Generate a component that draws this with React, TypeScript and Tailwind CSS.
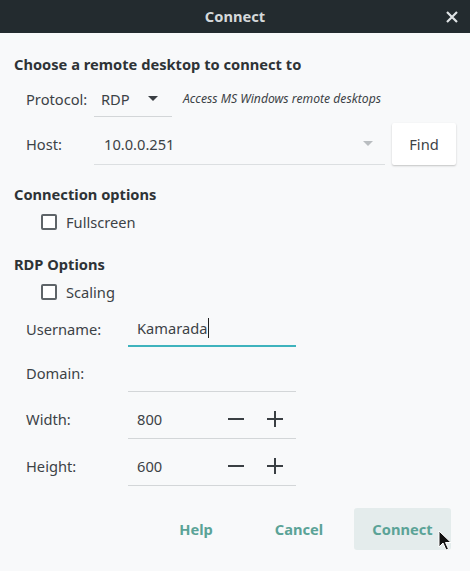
import React from "react";

const font = { fontFamily: '"Noto Sans", "Open Sans", sans-serif' };

const Checkbox = ({ label }: { label: string }) => (
  <div className="flex items-center h-[22px] pl-[27px]">
    <span className="w-4 h-4 border-2 border-[#5e6468] rounded-[2px] bg-white" />
    <span className="ml-[9px] text-[14.67px] text-[#3c4246]">{label}</span>
  </div>
);

const Minus = () => (
  <svg width="16" height="16" viewBox="0 0 16 16">
    <rect x="0" y="7" width="16" height="2" fill="#3a3f43" />
  </svg>
);

const Plus = () => (
  <svg width="16" height="16" viewBox="0 0 16 16">
    <rect x="0" y="7" width="16" height="2" fill="#3a3f43" />
    <rect x="7" y="0" width="2" height="16" fill="#3a3f43" />
  </svg>
);

const SpinRow = ({ label, value }: { label: string; value: string }) => (
  <div className="flex items-center h-[40px] mt-[7px]">
    <span className="w-[114px] pl-[12px] text-[14.67px] text-[#3c4246]">{label}</span>
    <div className="w-[168px] h-full flex items-center border-b border-[#d3d6d8]">
      <span className="pl-[9px] text-[14.67px] text-[#3c4246] flex-1">{value}</span>
      <span className="w-[39px] flex justify-center">
        <Minus />
      </span>
      <span className="w-[39px] flex justify-center mr-[2px]">
        <Plus />
      </span>
    </div>
  </div>
);

export default function App() {
  return (
    <div className="w-[470px] h-[571px] bg-[#f8f9fa] flex flex-col relative" style={font}>
      <div className="h-[33px] bg-[#232b2f] flex items-center justify-center relative">
        <span className="text-[14.67px] font-bold text-[#d5d9db] -mt-[1px]">Connect</span>
        <svg
          className="absolute right-[12px] top-[11px]"
          width="12"
          height="12"
          viewBox="0 0 12 12"
        >
          <path d="M1 1 L11 11 M11 1 L1 11" stroke="#dfe3e5" strokeWidth="2.2" />
        </svg>
      </div>

      <div className="flex flex-col px-[14px]">
        <div className="h-[22px] mt-[20px] flex items-center text-[14.67px] font-bold text-[#2e3336]">
          Choose a remote desktop to connect to
        </div>

        <div className="flex items-center h-[36px] mt-[6px]">
          <span className="w-[80px] pl-[12px] text-[14.67px] text-[#3c4246]">Protocol:</span>
          <div className="w-[78px] h-full flex items-center border-b border-[#d3d6d8]">
            <span className="pl-[7px] text-[14.67px] text-[#3c4246] flex-1">RDP</span>
            <svg className="mr-[14px]" width="10" height="6" viewBox="0 0 10 6">
              <path d="M0 0 L10 0 L5 5 Z" fill="#3a3f43" />
            </svg>
          </div>
          <span className="ml-[11px] text-[12.2px] italic text-[#3c4246]">
            Access MS Windows remote desktops
          </span>
        </div>

        <div className="flex items-center h-[42px] mt-[6px]">
          <span className="w-[80px] pl-[12px] text-[14.67px] text-[#3c4246]">Host:</span>
          <div className="w-[291px] h-[42px] flex items-center border-b border-[#dcdfe1]">
            <span className="pl-[10px] text-[14.67px] text-[#3c4246] flex-1">10.0.0.251</span>
            <svg className="mr-[12px]" width="10" height="6" viewBox="0 0 10 6">
              <path d="M0 0 L10 0 L5 5 Z" fill="#b9bdc0" />
            </svg>
          </div>
          <button className="ml-[7px] w-[64px] h-[42px] bg-white rounded-[2px] shadow-[0_1px_2px_rgba(0,0,0,0.22)] text-[14.67px] text-[#3c4246]">
            Find
          </button>
        </div>

        <div className="h-[22px] mt-[18px] flex items-center text-[14.67px] font-bold text-[#2e3336]">
          Connection options
        </div>
        <div className="mt-[6px]">
          <Checkbox label="Fullscreen" />
        </div>

        <div className="h-[22px] mt-[20px] flex items-center text-[14.67px] font-bold text-[#2e3336]">
          RDP Options
        </div>
        <div className="mt-[6px]">
          <Checkbox label="Scaling" />
        </div>

        <div className="flex items-center h-[36px] mt-[8px]">
          <span className="w-[114px] pl-[12px] text-[14.67px] text-[#3c4246]">Username:</span>
          <div className="w-[168px] h-full flex items-center border-b-2 border-[#3eb3bd]">
            <span className="pl-[9px] text-[14.67px] text-[#3c4246]">Kamarada</span>
            <span className="w-px h-[20px] bg-[#222] ml-[1px]" />
          </div>
        </div>

        <div className="flex items-center h-[38px] mt-[7px]">
          <span className="w-[114px] pl-[12px] text-[14.67px] text-[#3c4246]">Domain:</span>
          <div className="w-[168px] h-full border-b border-[#d3d6d8]" />
        </div>

        <SpinRow label="Width:" value="800" />
        <SpinRow label="Height:" value="600" />

        <div className="flex items-center justify-end h-[42px] mt-[22px] pr-[5px] text-[14.67px] font-bold text-[#5ba397]">
          <span className="w-[96px] text-center">Help</span>
          <span className="w-[110px] text-center">Cancel</span>
          <button className="w-[97px] h-[42px] bg-[#e4ecec] rounded-[3px] text-[#5ba397] font-bold">
            Connect
          </button>
        </div>
      </div>

      <svg
        className="absolute left-[438px] top-[530px]"
        width="14"
        height="22"
        viewBox="0 0 14 22"
      >
        <path
          d="M1 1 L1 17 L5 13 L8 20 L10.5 19 L7.5 12.5 L13 12.5 Z"
          fill="#111"
          stroke="#fff"
          strokeWidth="1"
        />
      </svg>
    </div>
  );
}
